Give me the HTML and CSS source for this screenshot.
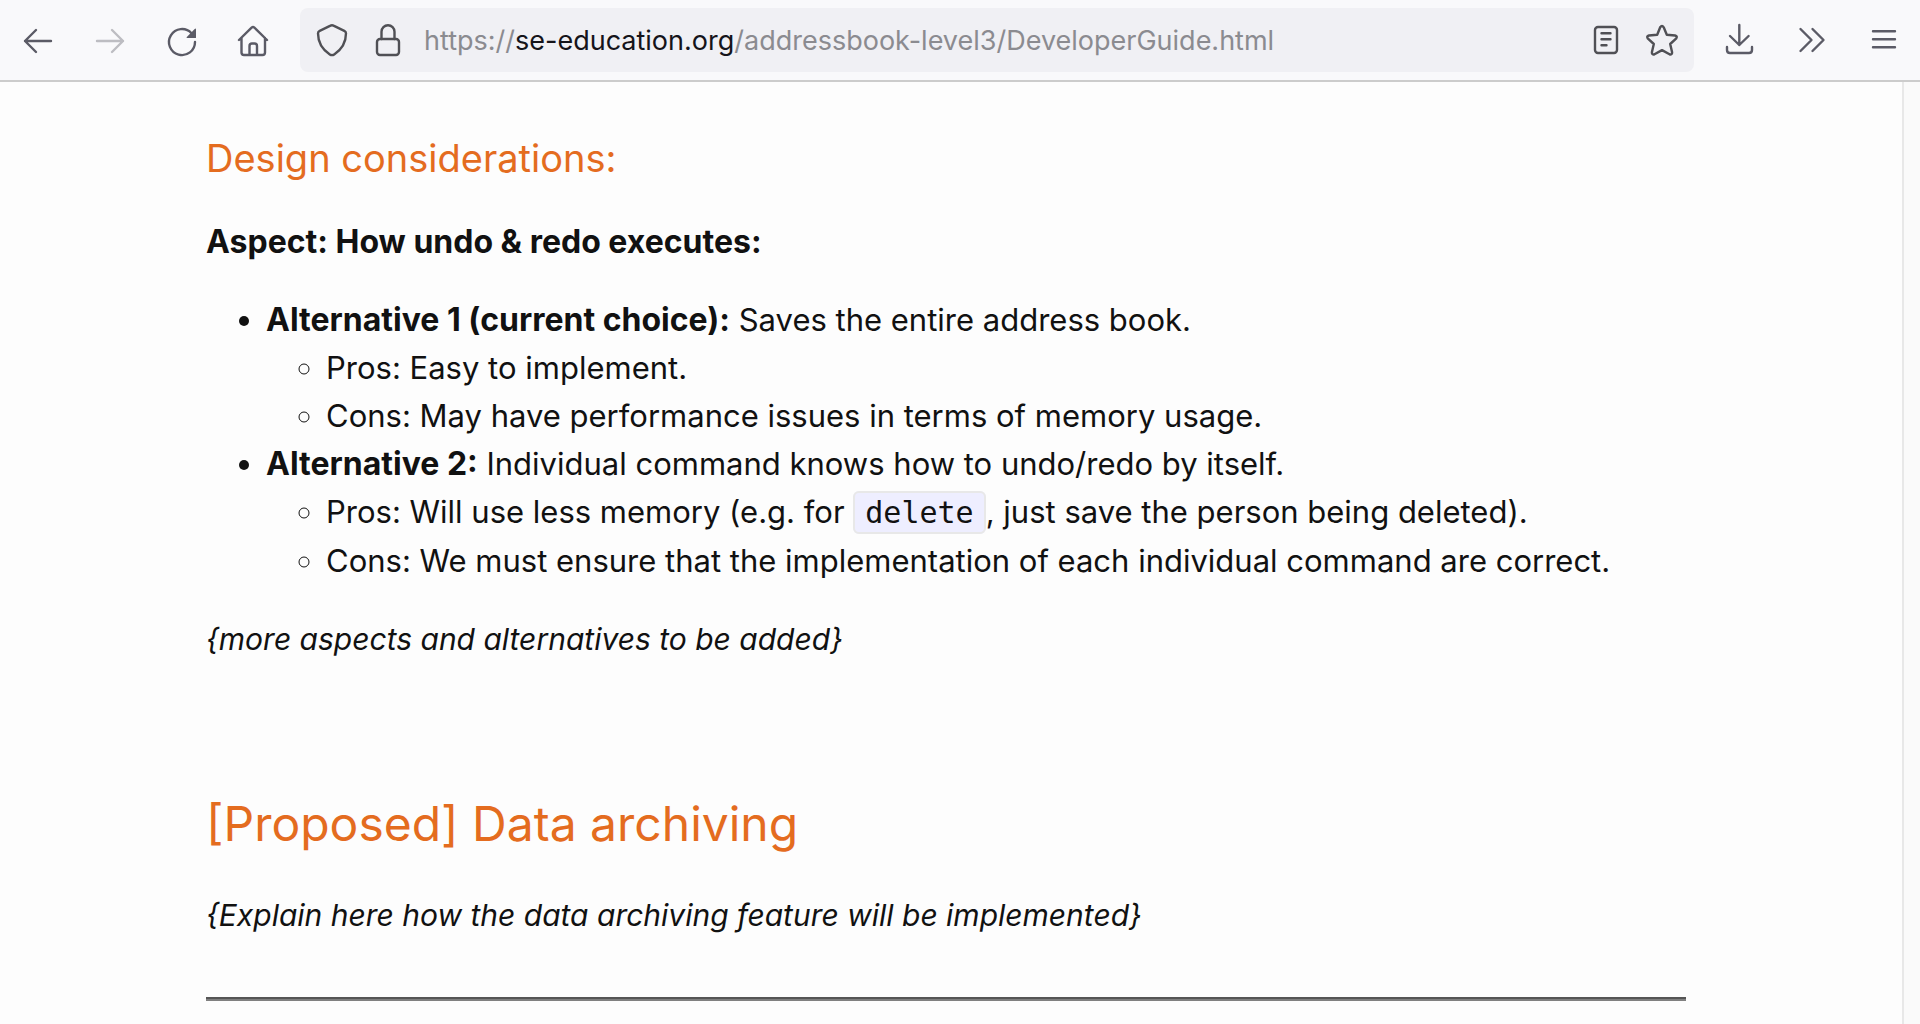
FILE: index.html
```html
<!DOCTYPE html>
<html lang="en">
<head>
<meta charset="utf-8">
<title>Developer Guide</title>
<link rel="stylesheet" href="styles.css">
</head>
<body>
<header class="toolbar">
  <nav class="tools" aria-label="Navigation">
    <button class="tool" aria-label="Back"><svg class="icon" viewBox="0 0 32 32"><path d="M29 17H3M14 6 3 17l11 11"/></svg></button>
    <button class="tool" aria-label="Forward" disabled><svg class="icon" viewBox="0 0 32 32"><path d="M3 17h26M18 6l11 11-11 11"/></svg></button>
    <button class="tool" aria-label="Reload"><svg class="icon" viewBox="0 0 32 32"><path d="M29 18A13 13 0 1 1 25.5 9.200"/><path class="solid" d="M30 5.300v8.200q0 .5-.5.500h-8.300q-1.200 0-.4-.9l7.900-8.100q1.300-1.100 1.300.3z"/></svg></button>
    <button class="tool" aria-label="Home"><svg class="icon" viewBox="0 0 32 32"><path d="M1 16 13.600 3.600q1.400-1.200 2.800 0L29 16M3.500 14v14.500Q3.500 31 6 31h18.500q2.500 0 2.500-2.500V14M11.500 31v-9q0-2.500 2.500-2.500h2.500q2.500 0 2.500 2.500v9"/></svg></button>
  </nav>
  <div class="urlbar">
    <button class="tool small" aria-label="Tracking protection"><svg class="icon" viewBox="0 0 32 32"><path d="M14.500 1.600q1.500-.8 3 0l10.800 5.200q1.700.8 1.700 2.400c0 8.200-3.400 15.600-11.800 21.200q-2.200 1.400-4.400 0C5.400 24.800 2 17.400 2 9.200q0-1.600 1.700-2.400z"/></svg></button>
    <button class="tool small" aria-label="Connection secure"><svg class="icon" viewBox="0 0 32 32"><rect x="5" y="15" width="22" height="16" rx="3"/><path d="M9.500 15V7.700a6.500 6.500 0 0 1 13 0V15"/></svg></button>
    <div class="url" role="textbox" aria-label="Address" tabindex="0">https://<span class="domain">se-education.org</span>/addressbook-level3/DeveloperGuide.html</div>
    <button class="tool small" aria-label="Reader view"><svg class="icon" viewBox="0 0 32 32"><rect x="5" y="3" width="22" height="26" rx="3"/><path d="M11.500 9.300h9M11.500 15.300h9M11.500 21.300h5"/></svg></button>
    <button class="tool small" aria-label="Bookmark"><svg class="icon" viewBox="0 0 32 32"><path d="M14.200 3.300q1.800-2.600 3.500 0l3.100 7.400 8.300.8q2.600.6 1.200 2.800L24.200 20l1.900 8.200q.1 2.800-2.600 2.100L16 26.100l-7.500 4.200q-2.700.7-2.600-2.100L7.800 20l-6.100-5.700q-1.400-2.200 1.200-2.800l8.300-.8z"/></svg></button>
  </div>
  <div class="tools">
    <button class="tool" aria-label="Downloads"><svg class="icon" viewBox="0 0 32 32"><path d="M15.300 1v20M6 12l9.300 9 9.300-9M3 23v3q0 3 3 3h19q3 0 3-3v-3"/></svg></button>
    <button class="tool" aria-label="More tools"><svg class="icon" viewBox="0 0 32 32"><path d="M4.500 5l11 11-11 11M16.500 5l11 11-11 11"/></svg></button>
    <button class="tool" aria-label="Menu"><svg class="icon" viewBox="0 0 32 32"><path d="M5 7.300h22M5 15.300h22M5 23.300h22"/></svg></button>
  </div>
</header>
<div class="viewport">
  <main class="page">
    <article class="content">
      <h3 class="subheading">Design considerations:</h3>
      <p class="text"><strong>Aspect: How undo &amp; redo executes:</strong></p>
      <ul class="list">
        <li><strong>Alternative 1 (current choice):</strong> Saves the entire address book.
          <ul class="sublist">
            <li>Pros: Easy to implement.</li>
            <li>Cons: May have performance issues in terms of memory usage.</li>
          </ul>
        </li>
        <li><strong>Alternative 2:</strong> Individual command knows how to undo/redo by itself.
          <ul class="sublist">
            <li>Pros: Will use less memory (e.g. for <code class="code">delete</code>, just save the person being deleted).</li>
            <li>Cons: We must ensure that the implementation of each individual command are correct.</li>
          </ul>
        </li>
      </ul>
      <p class="text"><em>{more aspects and alternatives to be added}</em></p>
      <h2 class="heading">[Proposed] Data archiving</h2>
      <p class="text"><em>{Explain here how the data archiving feature will be implemented}</em></p>
      <hr class="rule">
    </article>
  </main>
  <div class="gutter"></div>
</div>
</body>
</html>
```
FILE: styles.css
```css
* { box-sizing: border-box; }

body {
  margin: 0;
  min-height: 100vh;
  display: flex;
  flex-direction: column;
  background: #fdfdfd;
  color: #111;
  font: 31px/48px Inter, "Liberation Sans", sans-serif;
}

.toolbar {
  display: flex;
  align-items: center;
  gap: 14px;
  padding: 8px 4px 8px 6px;
  background: #f9f9fb;
  border-bottom: 2px solid #ccc;
}

.tools { display: flex; gap: 8px; }

.tool {
  display: flex;
  align-items: center;
  justify-content: center;
  width: 64px;
  height: 64px;
  padding: 0;
  border: 0;
  background: none;
  color: #5b5b66;
}
.tool:disabled { color: #bdbdc2; }
.tool.small { width: 56px; color: #505055; }

.icon {
  width: 32px;
  height: 32px;
  fill: none;
  stroke: currentColor;
  stroke-width: 2.4;
  stroke-linecap: round;
  stroke-linejoin: round;
  overflow: visible;
}
.icon .solid { fill: currentColor; stroke: none; }

.urlbar {
  flex: 1;
  display: flex;
  align-items: center;
  padding: 0 4px;
  border-radius: 8px;
  background: #f0f0f4;
}
.url {
  flex: 1;
  min-width: 0;
  padding: 2px 0 0 8px;
  overflow: hidden;
  white-space: nowrap;
  font-size: 27px;
  color: #8b8b90;
}
.domain { color: #15141a; }

.viewport { flex: 1; display: flex; }
.page { flex: 1; padding: 46px 10px 20px 0; }
.gutter {
  width: 18px;
  background: #fafafa;
  border-left: 2px solid #e8e8e8;
}

.content { max-width: 1480px; margin: 0 auto; }

.subheading, .heading {
  margin: 0 0 30px;
  color: #e46c1f;
  font-weight: 400;
}
.subheading { font-size: 38px; line-height: 60px; }
.heading { margin: 122px 0 28px; font-size: 48px; line-height: 78px; }

.text { margin: 0 0 30px; }
.list { margin: 0 0 30px; padding-left: 60px; }
.sublist { margin: 0; padding-left: 60px; }
strong { font-size: 32px; font-weight: 700; line-height: 1; }
em { font-size: 30px; line-height: 1; }

.code {
  padding: 2px 10px;
  border: 2px solid #e8e8e8;
  border-radius: 6px;
  background: #eef;
  font: 30px/48px "DejaVu Sans Mono", monospace;
}

.rule {
  height: 4px;
  margin: 58px 0 0;
  border: 0;
  border-top: 2px solid #555;
  background: #808080;
}
```
